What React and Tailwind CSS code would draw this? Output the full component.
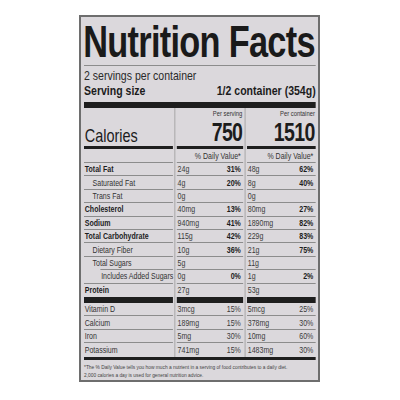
import React from "react";

const nutrients = [
  { label: "Total Fat", bold: true, v1: "24g", p1: "31%", v2: "48g", p2: "62%" },
  { label: "Saturated Fat", indent: "pl-[11px]", v1: "4g", p1: "20%", v2: "8g", p2: "40%" },
  { label: "Trans Fat", indent: "pl-[11px]", v1: "0g", p1: "", v2: "0g", p2: "" },
  { label: "Cholesterol", bold: true, v1: "40mg", p1: "13%", v2: "80mg", p2: "27%" },
  { label: "Sodium", bold: true, v1: "940mg", p1: "41%", v2: "1890mg", p2: "82%" },
  { label: "Total Carbohydrate", bold: true, v1: "115g", p1: "42%", v2: "229g", p2: "83%" },
  { label: "Dietary Fiber", indent: "pl-[11px]", v1: "10g", p1: "36%", v2: "21g", p2: "75%" },
  { label: "Total Sugars", indent: "pl-[11px]", lineIndent: true, v1: "5g", p1: "", v2: "11g", p2: "" },
  { label: "Includes Added Sugars", indent: "pl-[22px]", v1: "0g", p1: "0%", v2: "1g", p2: "2%" },
  { label: "Protein", bold: true, noLine: true, v1: "27g", p1: "", v2: "53g", p2: "" },
];

const vitamins = [
  { label: "Vitamin D", v1: "3mcg", p1: "15%", v2: "5mcg", p2: "25%" },
  { label: "Calcium", v1: "189mg", p1: "15%", v2: "378mg", p2: "30%" },
  { label: "Iron", v1: "5mg", p1: "30%", v2: "10mg", p2: "60%" },
  { label: "Potassium", noLine: true, v1: "741mg", p1: "15%", v2: "1483mg", p2: "30%" },
];

function Sep() {
  return (
    <div className="flex justify-center">
      <div className="w-px bg-[#9a9a9a]" />
    </div>
  );
}

function Line({ hidden, indent }) {
  if (hidden) return <div className="h-px" />;
  return <div className={"h-px bg-[#8c8c8c] " + (indent ? "ml-[21px]" : "")} />;
}

function ValueCell({ v, p, boldPct, noLine }) {
  return (
    <div className="flex flex-col">
      <div className="flex flex-1 items-center justify-between pl-[1px] pr-[3px]">
        <span className="text-[#3a3a3a]">{v}</span>
        <span className={boldPct ? "font-bold text-[#1c1c1c]" : "text-[#3a3a3a]"}>{p}</span>
      </div>
      <Line hidden={noLine} />
    </div>
  );
}

function Row({ r, heightClass, boldPct }) {
  return (
    <div className={"grid grid-cols-[114px_5px_85px_5px_88px] text-[9px] leading-[10px] " + heightClass}>
      <div className="flex flex-col">
        <div
          className={
            "flex flex-1 items-center whitespace-nowrap " +
            (r.indent ? r.indent : "pl-[1px]") +
            (r.bold ? " font-bold text-[#1c1c1c]" : " text-[#333333]")
          }
        >
          {r.label}
        </div>
        <Line hidden={r.noLine} indent={r.lineIndent} />
      </div>
      <Sep />
      <ValueCell v={r.v1} p={r.p1} boldPct={boldPct} noLine={r.noLine} />
      <Sep />
      <ValueCell v={r.v2} p={r.p2} boldPct={boldPct} noLine={r.noLine} />
    </div>
  );
}

export default function App() {
  return (
    <div className="w-[400px] h-[400px] bg-white pt-[15px] pl-[79px] font-['Liberation_Sans',Arial,sans-serif]">
      <div className="w-[241px] border-2 border-[#6e6e6e] bg-[#dbd8dc] pt-[3px] pl-[3px] pr-[2px] pb-[1px]">
        <div className="w-[297px] origin-left scale-x-[0.78] text-[#1c1c1c]">
          <div className="text-[44px] font-bold leading-[43px] tracking-[-0.9px] whitespace-nowrap text-[#1a1a1a] -ml-[1px]">
            Nutrition Facts
          </div>
          <div className="mt-[2px] h-px bg-[#8c8c8c]" />
          <div className="mt-[1.5px] text-[13.5px] leading-[15px] text-[#2a2a2a]">2 servings per container</div>
          <div className="flex justify-between text-[13.5px] font-bold leading-[15px]">
            <span>Serving size</span>
            <span>1/2 container (354g)</span>
          </div>
          <div className="mt-[4.5px] h-[6px] bg-[#1e1e1e]" />

          <div className="grid h-[41px] grid-cols-[114px_5px_85px_5px_88px]">
            <div className="flex flex-col justify-end">
              <div className="pb-[1px] pl-[1px] text-[18.5px] leading-[18px]">Calories</div>
              <div className="h-[3px] bg-[#1e1e1e]" />
            </div>
            <Sep />
            <div className="flex flex-col items-end pt-[2px]">
              <div className="pr-[1px] text-[7.5px] leading-[8px] text-[#333333]">Per serving</div>
              <div className="pr-[1px] text-[25px] font-bold leading-[28px] tracking-[-0.8px]">750</div>
              <div className="h-[3px] w-full bg-[#1e1e1e]" />
            </div>
            <Sep />
            <div className="flex flex-col items-end pt-[2px]">
              <div className="pr-[1px] text-[7.5px] leading-[8px] text-[#333333]">Per container</div>
              <div className="pr-[1px] text-[25px] font-bold leading-[28px] tracking-[-0.7px]">1510</div>
              <div className="h-[3px] w-full bg-[#1e1e1e]" />
            </div>
          </div>

          <div className="grid h-[14px] grid-cols-[114px_5px_85px_5px_88px] text-[9px] leading-[10px]">
            <div className="flex flex-col">
              <div className="flex-1" />
              <Line />
            </div>
            <Sep />
            <div className="flex flex-col">
              <div className="flex flex-1 items-center justify-end pr-[3px] text-[#333333]">% Daily Value*</div>
              <Line />
            </div>
            <Sep />
            <div className="flex flex-col">
              <div className="flex flex-1 items-center justify-end pr-[3px] text-[#333333]">% Daily Value*</div>
              <Line />
            </div>
          </div>

          {nutrients.map((r) => (
            <Row key={r.label} r={r} heightClass="h-[13.4px]" boldPct />
          ))}

          <div className="grid h-[6px] grid-cols-[114px_5px_85px_5px_88px]">
            <div className="bg-[#1e1e1e]" />
            <Sep />
            <div className="bg-[#1e1e1e]" />
            <Sep />
            <div className="bg-[#1e1e1e]" />
          </div>

          {vitamins.map((r) => (
            <Row key={r.label} r={r} heightClass="h-[13.5px]" />
          ))}

          <div className="h-[3px] bg-[#1e1e1e]" />

          <div className="pt-[3px] text-[6.2px] leading-[8px] text-[#444444]">
            <div className="whitespace-nowrap">
              *The % Daily Value tells you how much a nutrient in a serving of food contributes to a daily diet.
            </div>
            <div className="whitespace-nowrap">2,000 calories a day is used for general nutrition advice.</div>
          </div>
        </div>
      </div>
    </div>
  );
}
